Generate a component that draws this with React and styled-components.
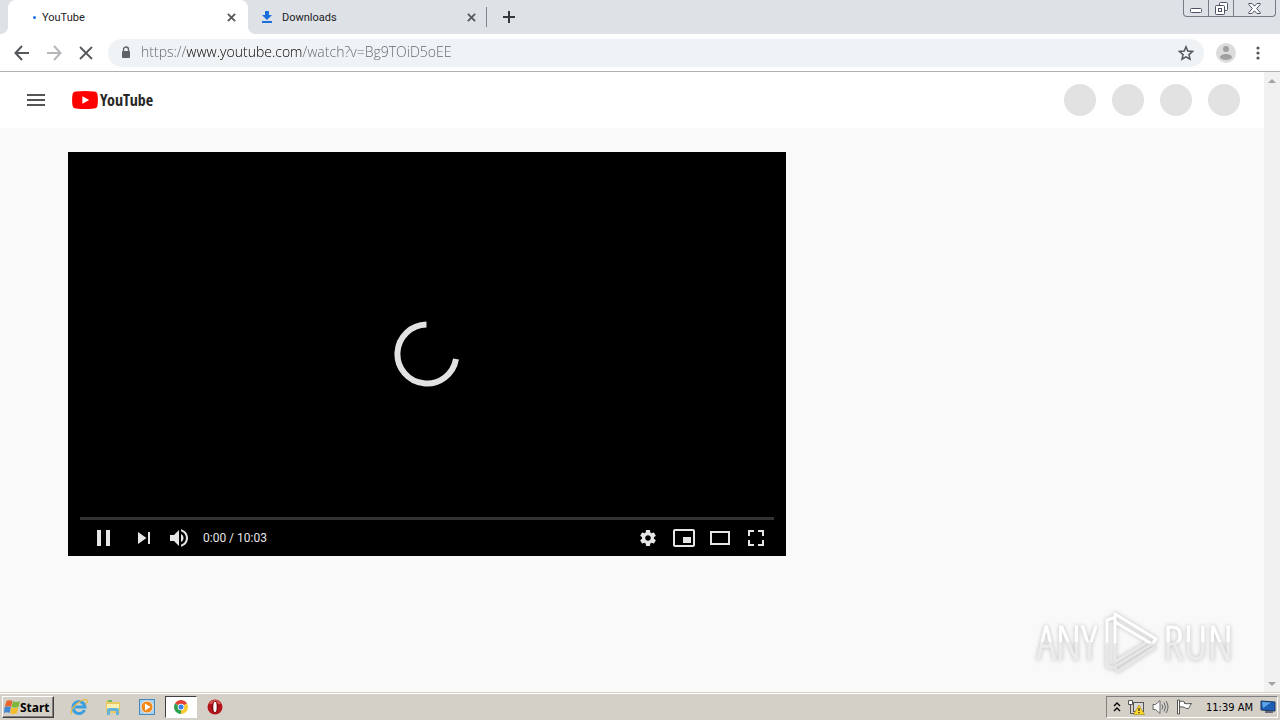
import styled, { createGlobalStyle } from "styled-components";

const GlobalStyle = createGlobalStyle`
  * {
    box-sizing: border-box;
  }
  body {
    margin: 0;
    font-family: "DejaVu Sans Condensed", "DejaVu Sans", sans-serif;
    font-size: 11px;
    color: #202124;
  }
  button {
    padding: 0;
    border: none;
    background: none;
    color: inherit;
    font: inherit;
  }
  svg {
    display: block;
  }
`;

const Screen = styled.div`
  display: flex;
  flex-direction: column;
  min-height: 100vh;
`;

/* browser window */

const TabStrip = styled.header`
  display: flex;
  justify-content: space-between;
  height: 34px;
  padding-left: 8px;
  background: #dee1e6;
`;

const Tabs = styled.div`
  display: flex;
  align-items: center;
`;

const Tab = styled.div`
  position: relative;
  display: flex;
  align-items: center;
  width: 240px;
  height: 34px;
  padding: 0 12px 0 10px;
  border-radius: 8px 8px 0 0;
  background: ${({ $active }) => ($active ? "#fff" : "transparent")};

  & .favicon {
    display: flex;
    justify-content: center;
    width: 18px;
    margin-right: 6px;
  }
  & .title {
    flex: 1;
    font-family: Roboto, sans-serif;
    font-size: 11px;
  }
  &::before,
  &::after {
    content: "";
    display: ${({ $active }) => ($active ? "block" : "none")};
    position: absolute;
    bottom: 0;
    width: 8px;
    height: 8px;
  }
  &::before {
    left: -8px;
    background: radial-gradient(circle at 0 0, transparent 8px, #fff 8px);
  }
  &::after {
    right: -8px;
    background: radial-gradient(circle at 100% 0, transparent 8px, #fff 8px);
  }
`;

const LoadingDot = styled.span`
  width: 3px;
  height: 3px;
  margin-left: 14px;
  border-radius: 50%;
  background: #1a73e8;
`;

const TabDivider = styled.span`
  width: 1px;
  height: 20px;
  margin-left: -2px;
  background: #80868b;
`;

const NewTab = styled.button`
  display: flex;
  align-items: center;
  justify-content: center;
  width: 28px;
  height: 28px;
  margin-left: 8px;
`;

const WindowButtons = styled.div`
  display: flex;
  height: 17px;
  margin-right: 4px;
  border: 1px solid #767b86;
  border-top: none;
  border-radius: 0 0 4px 4px;

  & button {
    display: flex;
    align-items: center;
    justify-content: center;
    width: 25px;
  }
  & button + button {
    border-left: 1px solid #767b86;
  }
  & button:first-child {
    width: 24px;
  }
  & button:last-child {
    width: 42px;
  }
`;

const Toolbar = styled.div`
  display: flex;
  align-items: center;
  height: 38px;
  padding: 0 6px;
  border-bottom: 1px solid #b0b1b3;
  background: #fff;
`;

const ToolButton = styled.button`
  display: flex;
  align-items: center;
  justify-content: center;
  width: 32px;
  height: 28px;
  color: ${({ $muted }) => ($muted ? "#b4b6b9" : "#54575b")};
`;

const AddressBar = styled.div`
  display: flex;
  flex: 1;
  align-items: center;
  height: 28px;
  margin: 0 6px;
  padding: 0 2px 0 12px;
  border-radius: 14px;
  background: #f0f3f5;
`;

const AddressInput = styled.input`
  flex: 1;
  min-width: 0;
  height: 28px;
  margin-left: 9px;
  padding: 0 0 2px;
  border: none;
  outline: none;
  color: transparent;
  font-family: "Open Sans", sans-serif;
  font-size: 14px;
  font-weight: 300;
  background: linear-gradient(
    to right,
    #5f6368 46px,
    #000 46px 162px,
    #5f6368 162px
  );
  background-clip: text;
  -webkit-background-clip: text;
`;

/* page */

const Viewport = styled.div`
  display: flex;
  flex: 1;
  background: #f9f9f9;
`;

const Page = styled.div`
  position: relative;
  flex: 1;
`;

const Masthead = styled.header`
  display: flex;
  align-items: center;
  height: 56px;
  padding: 0 24px;
  background: #fff;
`;

const MenuButton = styled.button`
  display: flex;
  justify-content: center;
  width: 24px;
`;

const Logo = styled.a`
  display: flex;
  align-items: center;
  flex: 1;
  gap: 2px;
  margin-left: 24px;
  color: #282828;
  font-family: "Open Sans Condensed", "Roboto Condensed", Roboto, sans-serif;
  font-size: 16px;
  font-weight: 700;
  line-height: 20px;
  text-decoration: none;
`;

const Placeholders = styled.div`
  display: flex;
  gap: 16px;

  & span {
    width: 32px;
    height: 32px;
    border-radius: 50%;
    background: #e2e2e2;
  }
`;

const Watch = styled.main`
  display: grid;
  grid-template-columns: minmax(0, 1fr) 402px;
  gap: 24px;
  padding: 24px 52px 0 68px;
`;

const Player = styled.section`
  display: flex;
  flex-direction: column;
  aspect-ratio: 16 / 9;
  padding: 0 12px;
  background: #000;
  color: #e6e6e6;
`;

const Stage = styled.div`
  display: flex;
  flex: 1;
  align-items: center;
  justify-content: center;
  padding-top: 39px;
`;

const Progress = styled.div`
  height: 3px;
  background: #333;
`;

const Controls = styled.div`
  display: flex;
  align-items: center;
  height: 36px;

  & .time {
    flex: 1;
    padding: 0 5px;
    font-family: Roboto, sans-serif;
    font-size: 12px;
  }
`;

const PlayerButton = styled.button`
  display: flex;
  justify-content: center;
  width: ${({ $wide }) => ($wide ? "46px" : "36px")};
`;

const Watermark = styled.div`
  position: absolute;
  right: 31px;
  bottom: 18px;
  display: flex;
  align-items: center;
  gap: 4px;
  filter: drop-shadow(0 0 2px #bbb);
  font-family: "Open Sans Condensed Light", "Roboto Condensed Light",
    "Roboto Condensed", Roboto, sans-serif;
  font-size: 48px;
  font-weight: 300;
  line-height: 60px;

  & span {
    background: linear-gradient(#fff 50%, #ececec 50%);
    background-clip: text;
    -webkit-background-clip: text;
    -webkit-text-stroke: 1px transparent;
    color: transparent;
  }
`;

const Scrollbar = styled.div`
  display: flex;
  flex-direction: column;
  justify-content: space-between;
  width: 16px;
  background: #f1f1f1;

  & button {
    display: flex;
    align-items: center;
    justify-content: center;
    height: 17px;
    color: #a3a3a3;
  }
`;

/* taskbar */

const Taskbar = styled.footer`
  display: flex;
  align-items: center;
  height: 28px;
  padding: 2px 2px 1px;
  border-top: 1px solid #d4d0c8;
  background: #d4d0c8;
  box-shadow: inset 0 1px #fff;
  color: #000;
`;

const StartButton = styled.button`
  display: flex;
  align-items: center;
  height: 22px;
  padding: 0 3px 0 1px;
  border: 1px solid;
  border-color: #fff #404040 #404040 #fff;
  box-shadow: inset -1px -1px #808080;
  font-family: "Noto Sans", sans-serif;
  font-size: 12px;
  font-weight: 700;
`;

const QuickLaunch = styled.div`
  display: flex;
  flex: 1;
  gap: 2px;
  margin-left: 9px;
`;

const LaunchButton = styled.button`
  display: flex;
  align-items: center;
  justify-content: center;
  width: 32px;
  height: 22px;
  border: 1px solid;
  border-color: ${({ $open }) =>
    $open ? "#404040 #fff #fff #404040" : "transparent"};
  background: ${({ $open }) => ($open ? "#fff" : "none")};
`;

const Tray = styled.div`
  display: flex;
  align-items: center;
  gap: 7px;
  height: 22px;
  padding: 0 1px 0 6px;
  border: 1px solid;
  border-color: #808080 #fff #fff #808080;

  & time {
    margin-left: 6px;
  }
`;

const CloseIcon = () => (
  <svg width="9" height="9" viewBox="0 0 10 10" stroke="#54575b" strokeWidth="2">
    <path d="M1 1l8 8M9 1L1 9" />
  </svg>
);

const ARROWS = {
  up: "M0 5L4 1L8 5Z",
  down: "M0 1L4 5L8 1Z",
};

const ArrowIcon = ({ dir }) => (
  <svg width="8" height="6" viewBox="0 0 8 6" fill="currentColor">
    <path d={ARROWS[dir]} />
  </svg>
);

const PLAYER_ICONS = {
  pause: "M12 26h4V10h-4zM21 26h4V10h-4z",
  next: "M12 24l8.5-6L12 12zM22 12v12h2V12z",
  volume:
    "M8 21h4l5 5V10l-5 5H8zM19 14v8c1.48-.68 2.5-2.23 2.5-4S20.480 14.740 19 14zM19 11.290C21.890 12.150 24 14.830 24 18s-2.110 5.850-5 6.710v2.060c4.010-.91 7-4.490 7-8.770s-2.990-7.860-7-8.770z",
  settings:
    "m23.940 18.780c.03-.25.05-.51.05-.78 0-.27-.02-.52-.05-.78l1.680-1.320c.15-.12.19-.33.09-.51l-1.600-2.760c-.09-.17-.31-.24-.48-.17l-1.990.8c-.41-.32-.86-.58-1.350-.78l-.30-2.120c-.02-.19-.19-.33-.39-.33l-3.200 0c-.2 0-.36.14-.39.33l-.30 2.120c-.48.2-.93.47-1.350.78l-1.990-.8c-.18-.07-.39 0-.48.17l-1.600 2.760c-.10.17-.05.39.09.51l1.680 1.320c-.03.25-.05.52-.05.78 0 .26.02.52.05.78l-1.680 1.320c-.15.12-.19.33-.09.51l1.600 2.760c.09.17.31.24.48.17l1.990-.8c.41.32.86.58 1.350.78l.30 2.120c.02.19.19.33.39.33l3.200 0c.2 0 .36-.14.39-.33l.30-2.120c.48-.2.93-.47 1.350-.78l1.990.8c.18.07.39 0 .48-.17l1.600-2.760c.09-.17.05-.39-.09-.51l-1.680-1.320zm-5.940 2.010c-1.540 0-2.800-1.250-2.800-2.800 0-1.540 1.250-2.800 2.800-2.800 1.540 0 2.800 1.250 2.800 2.800 0 1.540-1.250 2.800-2.800 2.800z",
  miniplayer:
    "M25 17h-8v6h8zM29 25V10.980C29 9.880 28.100 9 27 9H9c-1.100 0-2 .88-2 1.980V25c0 1.100.9 2 2 2h18c1.100 0 2-.9 2-2zM27 25H9V11h18z",
  theater: "M28 11v14H8V11zM10 13h16v10H10z",
  fullscreen:
    "M10 16h2v-4h4v-2h-6zM20 10v2h4v4h2v-6zM24 24h-4v2h6v-6h-2zM12 20h-2v6h6v-2h-4z",
};

const PlayerControl = ({ name, label, wide }) => (
  <PlayerButton $wide={wide} aria-label={label}>
    <svg width="36" height="36" viewBox="0 0 36 36" fill="currentColor" fillRule="evenodd">
      <path d={PLAYER_ICONS[name]} />
    </svg>
  </PlayerButton>
);

const BrowserTabs = () => (
  <TabStrip>
    <Tabs>
      <Tab $active>
        <span className="favicon">
          <LoadingDot />
        </span>
        <span className="title">YouTube</span>
        <button aria-label="Close YouTube">
          <CloseIcon />
        </button>
      </Tab>
      <Tab>
        <span className="favicon">
          <svg width="10" height="12" viewBox="0 0 10 12" fill="#1a6fdc">
            <path d="M3 0h4v4h3L5 9L0 4h3zM0 10h10v2H0z" />
          </svg>
        </span>
        <span className="title">Downloads</span>
        <button aria-label="Close Downloads">
          <CloseIcon />
        </button>
      </Tab>
      <TabDivider />
      <NewTab aria-label="New tab">
        <svg width="12" height="12" viewBox="0 0 12 12" stroke="#35383c" strokeWidth="2">
          <path d="M6 0v12M0 6h12" />
        </svg>
      </NewTab>
    </Tabs>
    <WindowButtons>
      <button aria-label="Minimize">
        <svg width="13" height="12" viewBox="0 0 13 12" fill="#fff" stroke="#4c5263">
          <rect x=".5" y="6.500" width="11" height="4" rx="1" />
        </svg>
      </button>
      <button aria-label="Restore">
        <svg width="13" height="13" viewBox="0 0 13 13" fill="#fff" stroke="#4c5263">
          <rect x="4.500" y=".5" width="8" height="8" rx="1" />
          <rect x=".5" y="3.500" width="9" height="9" rx="1" />
          <rect x="3.500" y="6.500" width="3" height="3" />
        </svg>
      </button>
      <button aria-label="Close">
        <svg width="13" height="11" viewBox="0 0 13 11" fill="#fff" stroke="#4c5263">
          <path d="M.8.5h3.200l2.500 2.700L9 .5h3.200v1L8.600 5.500l3.600 4v1H9L6.500 7.800L4 10.500H.8v-1l3.600-4L.8 1.500z" />
        </svg>
      </button>
    </WindowButtons>
  </TabStrip>
);

const BrowserToolbar = () => (
  <Toolbar>
    <ToolButton aria-label="Back">
      <svg width="16" height="16" viewBox="0 0 16 16" fill="none" stroke="currentColor" strokeWidth="2">
        <path d="M15 8H2M8 1L1.500 8L8 15" />
      </svg>
    </ToolButton>
    <ToolButton $muted aria-label="Forward">
      <svg width="16" height="16" viewBox="0 0 16 16" fill="none" stroke="currentColor" strokeWidth="2">
        <path d="M1 8h13M8 1l6.500 7L8 15" />
      </svg>
    </ToolButton>
    <ToolButton aria-label="Stop">
      <svg width="14" height="14" viewBox="0 0 14 14" stroke="currentColor" strokeWidth="1.800">
        <path d="M1 1l12 12M13 1L1 13" />
      </svg>
    </ToolButton>
    <AddressBar>
      <svg width="12" height="13" viewBox="0 0 12 13">
        <path d="M3.500 6V3.500a2.500 2.500 0 0 1 5 0V6" fill="none" stroke="#5f6368" strokeWidth="1.400" />
        <rect x="2" y="5" width="8" height="7" rx="1" fill="#5f6368" />
      </svg>
      <AddressInput
        aria-label="Address"
        spellCheck={false}
        defaultValue="https://www.youtube.com/watch?v=Bg9TOiD5oEE"
      />
      <ToolButton aria-label="Bookmark this page">
        <svg width="16" height="16" viewBox="0 0 16 16" fill="none" stroke="currentColor" strokeWidth="1.500">
          <path d="M8 1.800l1.800 4.300l4.700.4l-3.600 3.100l1.100 4.600L8 11.800l-4 2.400l1.100-4.600l-3.600-3.100l4.700-.4z" />
        </svg>
      </ToolButton>
    </AddressBar>
    <ToolButton aria-label="Profile">
      <svg width="20" height="20" viewBox="0 0 20 20">
        <circle cx="10" cy="10" r="10" fill="#dcdcdc" />
        <circle cx="10" cy="6" r="3" fill="#a0a0a0" />
        <ellipse cx="10" cy="14" rx="6" ry="3" fill="#a0a0a0" />
      </svg>
    </ToolButton>
    <ToolButton aria-label="Menu">
      <svg width="4" height="14" viewBox="0 0 4 14" fill="currentColor">
        <circle cx="2" cy="2" r="1.600" />
        <circle cx="2" cy="7" r="1.600" />
        <circle cx="2" cy="12" r="1.600" />
      </svg>
    </ToolButton>
  </Toolbar>
);

const VideoPlayer = () => (
  <Player>
    <Stage>
      <svg width="66" height="66" viewBox="0 0 66 66" fill="none" stroke="#e2e2e2" strokeWidth="6">
        <path d="M32.500 3.500A29.500 29.500 0 1 0 62 38" />
      </svg>
    </Stage>
    <Progress />
    <Controls>
      <PlayerControl name="pause" label="Pause" wide />
      <PlayerControl name="next" label="Next" />
      <PlayerControl name="volume" label="Mute" />
      <span className="time">0:00 / 10:03</span>
      <PlayerControl name="settings" label="Settings" />
      <PlayerControl name="miniplayer" label="Miniplayer" />
      <PlayerControl name="theater" label="Theater mode" />
      <PlayerControl name="fullscreen" label="Full screen" />
    </Controls>
  </Player>
);

const AnyRunMark = () => (
  <Watermark>
    <span>ANY</span>
    <svg width="58" height="64" viewBox="0 0 58 64" fill="none" strokeWidth="3" strokeLinejoin="round" strokeLinecap="round">
      <path d="M12 8L6 10v24" stroke="#fff" />
      <path d="M6 34v22l5 2" stroke="#e9e9e9" />
      <path d="M14 32v20l31-19" stroke="#e9e9e9" />
      <path d="M14 32V4l41 25l-4 5L14 12" stroke="#fff" />
      <path d="M54 37L17 61l-4-4l38-23" stroke="#e6e6e6" />
    </svg>
    <span>RUN</span>
  </Watermark>
);

const DesktopTaskbar = () => (
  <Taskbar>
    <StartButton>
      <svg width="16" height="16" viewBox="0 0 16 16">
        <path d="M2.500 2Q5 .5 8.500 2L7.200 7.800Q4 6.500.8 7.800z" fill="#e8642c" />
        <path d="M9 2.300q3 1.500 7 0L14.500 8q-3 1.300-7 0z" fill="#7cb83c" />
        <path d="M.6 8.300q3-1.500 6.300 0L5.600 14q-3-1.500-5.600 0z" fill="#3f87d2" />
        <path d="M7.400 8.600q3 1.500 6.900 0l-1.500 5.700q-3 1.500-6.800 0z" fill="#f5bd2b" />
      </svg>
      Start
    </StartButton>
    <QuickLaunch>
      <LaunchButton aria-label="Internet Explorer">
        <svg width="18" height="18" viewBox="0 0 18 18" fill="none">
          <path d="M14.500 12A6 6 0 1 1 15 9H5" stroke="#3b9fdf" strokeWidth="3" />
          <path d="M2 16Q-1 13 6 6.500T17 2q1 2-1.500 4.500" stroke="#e6b84a" strokeWidth="1.300" />
        </svg>
      </LaunchButton>
      <LaunchButton aria-label="Windows Explorer">
        <svg width="18" height="18" viewBox="0 0 18 18">
          <path d="M2 3h6l1 1h7v11H2z" fill="#e9c964" />
          <path d="M3 6h12v5H3z" fill="#fbf0b0" />
          <path d="M4 2h4v2H4z" fill="#73ba5b" />
          <path d="M3 17v-5q0-2 2-2h8q2 0 2 2v5h-3v-4H6v4z" fill="#62b4dd" />
        </svg>
      </LaunchButton>
      <LaunchButton aria-label="Media Player">
        <svg width="16" height="16" viewBox="0 0 16 16">
          <rect x=".5" y=".5" width="15" height="15" fill="#a8d0ee" stroke="#4389bd" />
          <circle cx="8" cy="8" r="6" fill="#f08a1d" stroke="#fff" strokeWidth=".7" />
          <path d="M6 4.500L11.500 8L6 11.500z" fill="#fff" />
        </svg>
      </LaunchButton>
      <LaunchButton $open aria-label="Chrome">
        <svg width="14" height="14" viewBox="0 0 14 14">
          <path d="M7 7L.94 3.500A7 7 0 0 1 13.060 3.500z" fill="#e24234" />
          <path d="M7 7L13.060 3.500A7 7 0 0 1 7 14z" fill="#fbcb33" />
          <path d="M7 7v7A7 7 0 0 1 .94 3.500z" fill="#2fa04e" />
          <circle cx="7" cy="7" r="3.300" fill="#fff" />
          <circle cx="7" cy="7" r="2.500" fill="#3d7de8" />
        </svg>
      </LaunchButton>
      <LaunchButton aria-label="Opera">
        <svg width="16" height="16" viewBox="0 0 16 16">
          <circle cx="8" cy="8" r="7.500" fill="#b4141a" />
          <path d="M2 5a6.500 6.500 0 0 1 12 0z" fill="#d8524f" />
          <ellipse cx="8" cy="8" rx="3.200" ry="6" fill="#7d0a0e" />
          <ellipse cx="8" cy="8" rx="1.700" ry="5.200" fill="#fff" />
        </svg>
      </LaunchButton>
    </QuickLaunch>
    <Tray>
      <svg width="8" height="10" viewBox="0 0 8 10" fill="none" stroke="#000" strokeWidth="1.400">
        <path d="M1 4l3-3l3 3M1 9l3-3l3 3" />
      </svg>
      <svg width="17" height="16" viewBox="0 0 17 16">
        <rect x="5.500" y="3.500" width="10" height="9" fill="#d8d8d8" stroke="#555" />
        <path d="M.5 1.500h4v4h-4z" fill="#fff" stroke="#555" />
        <path d="M2.500 5.500v9h5" fill="none" stroke="#555" />
        <path d="M11 6l5.500 9.500h-11z" fill="#fbd72b" stroke="#a8870c" strokeWidth=".6" />
        <path d="M11 9v3M11 13v1.300" stroke="#222" strokeWidth="1.200" />
      </svg>
      <svg width="17" height="16" viewBox="0 0 17 16" fill="none" stroke="#666">
        <path d="M1 5.500h2.500L8 1.500v13L3.500 10.500H1z" fill="#fff" />
        <path d="M10 5.500q1.500 2.500 0 5M12 3.500q3 4.500 0 9M14 2q4 6 0 12" />
      </svg>
      <svg width="17" height="16" viewBox="0 0 17 16" fill="#fff" stroke="#555">
        <path d="M1.500 1h2v14h-2z" />
        <path d="M3.500 2.500q3-1 5 .5v1.500q3 .5 7 0q-2 3-3 5q-2 .5-4-1q-2-1-5-.5z" />
      </svg>
      <time>11:39 AM</time>
      <svg width="16" height="14" viewBox="0 0 16 14">
        <path d="M1 1l14 1v9L1 10z" fill="#1d5fb4" stroke="#1a3560" />
        <path d="M2 2l9 .5L3 8z" fill="#5ea6e8" />
        <path d="M5 12h8" stroke="#667" strokeWidth="2" />
      </svg>
    </Tray>
  </Taskbar>
);

const App = () => {
  return (
    <Screen>
      <GlobalStyle />
      <BrowserTabs />
      <BrowserToolbar />
      <Viewport>
        <Page>
          <Masthead>
            <MenuButton aria-label="Guide">
              <svg width="18" height="12" viewBox="0 0 18 12" fill="#555">
                <path d="M0 0h18v2H0zM0 5h18v2H0zM0 10h18v2H0z" />
              </svg>
            </MenuButton>
            <Logo href="#">
              <svg width="26" height="18" viewBox="0 0 26 18">
                <path d="M4 .5Q13-.5 22 .5Q25 .7 25.500 3.500Q26.300 9 25.500 14.500Q25 17.300 22 17.500Q13 18.500 4 17.500Q1 17.300.5 14.500Q-.3 9 .5 3.500Q1 .7 4 .5z" fill="#f00" />
                <path d="M10.400 5.200L17.200 9L10.400 12.800z" fill="#fff" />
              </svg>
              YouTube
            </Logo>
            <Placeholders>
              <span />
              <span />
              <span />
              <span />
            </Placeholders>
          </Masthead>
          <Watch>
            <VideoPlayer />
          </Watch>
          <AnyRunMark />
        </Page>
        <Scrollbar>
          <button aria-label="Scroll up">
            <ArrowIcon dir="up" />
          </button>
          <button aria-label="Scroll down">
            <ArrowIcon dir="down" />
          </button>
        </Scrollbar>
      </Viewport>
      <DesktopTaskbar />
    </Screen>
  );
};

export default App;
